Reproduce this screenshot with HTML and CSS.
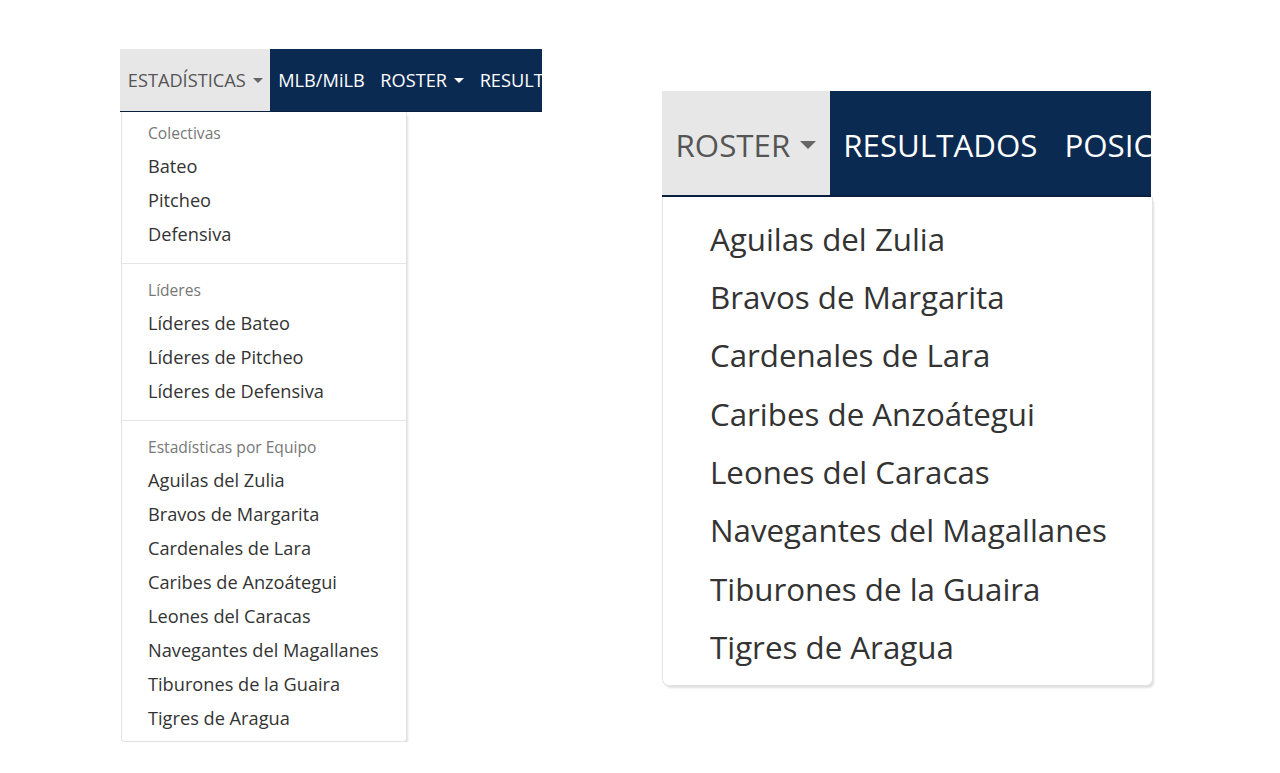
FILE: index.html
```html
<!DOCTYPE html>
<html lang="es">
<head>
<meta charset="utf-8">
<title>Menús de navegación</title>
<link rel="stylesheet" href="styles.css">
</head>
<body>
<main class="canvas">
  <section class="shot shot-small">
    <nav class="navbar">
      <ul class="nav">
        <li class="nav-item is-open"><a href="#">ESTADÍSTICAS <span class="caret"></span></a></li>
        <li class="nav-item"><a href="#">MLB/MiLB</a></li>
        <li class="nav-item"><a href="#">ROSTER <span class="caret"></span></a></li>
        <li class="nav-item"><a href="#">RESULTADOS</a></li>
        <li class="nav-item"><a href="#">POSICIONES</a></li>
      </ul>
    </nav>
    <ul class="dropdown">
      <li class="dropdown-header">Colectivas</li>
      <li><a href="#">Bateo</a></li>
      <li><a href="#">Pitcheo</a></li>
      <li><a href="#">Defensiva</a></li>
      <li class="divider"></li>
      <li class="dropdown-header">Líderes</li>
      <li><a href="#">Líderes de Bateo</a></li>
      <li><a href="#">Líderes de Pitcheo</a></li>
      <li><a href="#">Líderes de Defensiva</a></li>
      <li class="divider"></li>
      <li class="dropdown-header">Estadísticas por Equipo</li>
      <li><a href="#">Aguilas del Zulia</a></li>
      <li><a href="#">Bravos de Margarita</a></li>
      <li><a href="#">Cardenales de Lara</a></li>
      <li><a href="#">Caribes de Anzoátegui</a></li>
      <li><a href="#">Leones del Caracas</a></li>
      <li><a href="#">Navegantes del Magallanes</a></li>
      <li><a href="#">Tiburones de la Guaira</a></li>
      <li><a href="#">Tigres de Aragua</a></li>
    </ul>
  </section>

  <section class="shot shot-large">
    <nav class="navbar">
      <ul class="nav">
        <li class="nav-item is-open"><a href="#">ROSTER <span class="caret"></span></a></li>
        <li class="nav-item"><a href="#">RESULTADOS</a></li>
        <li class="nav-item"><a href="#">POSICIONES</a></li>
      </ul>
    </nav>
    <ul class="dropdown">
      <li><a href="#">Aguilas del Zulia</a></li>
      <li><a href="#">Bravos de Margarita</a></li>
      <li><a href="#">Cardenales de Lara</a></li>
      <li><a href="#">Caribes de Anzoátegui</a></li>
      <li><a href="#">Leones del Caracas</a></li>
      <li><a href="#">Navegantes del Magallanes</a></li>
      <li><a href="#">Tiburones de la Guaira</a></li>
      <li><a href="#">Tigres de Aragua</a></li>
    </ul>
  </section>
</main>
</body>
</html>
```
FILE: styles.css
```css
* {
  box-sizing: border-box;
}

html,
body {
  margin: 0;
  background: #ffffff;
}

body {
  font-family: "Open Sans", "Liberation Sans", sans-serif;
  color: #333333;
}

a {
  color: inherit;
  text-decoration: none;
}

.canvas {
  display: flex;
  align-items: flex-start;
  gap: 120px;
  padding: 49px 0 0 120px;
}

/* Each block is the same menu drawn at its own zoom factor (--s). */
.shot {
  display: flex;
  flex-direction: column;
  font-size: calc(14px * var(--s));
  line-height: 1.42857;
}

.shot-small {
  --s: 1.3;
  --nav-w: 422px;
  --nav-h: 63px;
  --nav-shift: 0px;
  --nav-pad: 7.8px;
  --caret-gap: 7px;
  --menu-w: 286px;
  --menu-pad-top: 6.5px;
  --menu-pad-bottom: 6.5px;
  --item-h: 34px;
  --item-x: 26px;
  --header-h: 30px;
  --divider-gap: 12px;
}

.shot-large {
  --s: 2.235;
  --nav-w: 489px;
  --nav-h: 106px;
  --nav-shift: 4px;
  --nav-pad: 13.5px;
  --caret-gap: 10px;
  --menu-w: 491px;
  --menu-pad-top: 13px;
  --menu-pad-bottom: 9px;
  --item-h: 58.3px;
  --item-x: 47px;
  --header-h: 51px;
  --divider-gap: 21px;
  margin-top: 42px;
}

/* Top navigation bar */
.navbar {
  width: var(--nav-w);
  height: var(--nav-h);
  background: #0b2a52;
  border-bottom: calc(1px * var(--s)) solid #081f3e;
  overflow: hidden;
}

.nav {
  display: flex;
  height: 100%;
  margin: 0;
  padding: 0;
  list-style: none;
  white-space: nowrap;
}

.nav-item a {
  display: flex;
  align-items: center;
  height: 100%;
  padding: var(--nav-shift) var(--nav-pad) 0 var(--nav-pad);
  color: #ffffff;
}

.nav-item.is-open a {
  background: #e7e7e7;
  color: #555555;
}

.caret {
  display: inline-block;
  width: 0;
  height: 0;
  margin-left: var(--caret-gap);
  border-top: calc(4px * var(--s)) solid currentColor;
  border-left: calc(4px * var(--s)) solid transparent;
  border-right: calc(4px * var(--s)) solid transparent;
}

.nav-item.is-open .caret {
  color: #666666;
}

/* Open dropdown panel */
.dropdown {
  width: var(--menu-w);
  margin: 0;
  padding: var(--menu-pad-top) 0 var(--menu-pad-bottom);
  list-style: none;
  background: #ffffff;
  border: 1px solid #e2e2e2;
  border-top: 0;
  border-radius: 0 0 calc(3px * var(--s)) calc(3px * var(--s));
  box-shadow: 2px 3px 2px -1px rgba(0, 0, 0, 0.12);
}

.shot-small .dropdown {
  margin-left: 1px;
}

.dropdown a {
  display: flex;
  align-items: center;
  height: var(--item-h);
  padding: 0 var(--item-x);
  color: #333333;
  white-space: nowrap;
}

.dropdown-header {
  display: flex;
  align-items: center;
  height: var(--header-h);
  padding: 0 var(--item-x);
  font-size: calc(12px * var(--s));
  color: #777777;
  white-space: nowrap;
}

.divider {
  height: 1px;
  margin: var(--divider-gap) 0;
  background: #e5e5e5;
}
```
